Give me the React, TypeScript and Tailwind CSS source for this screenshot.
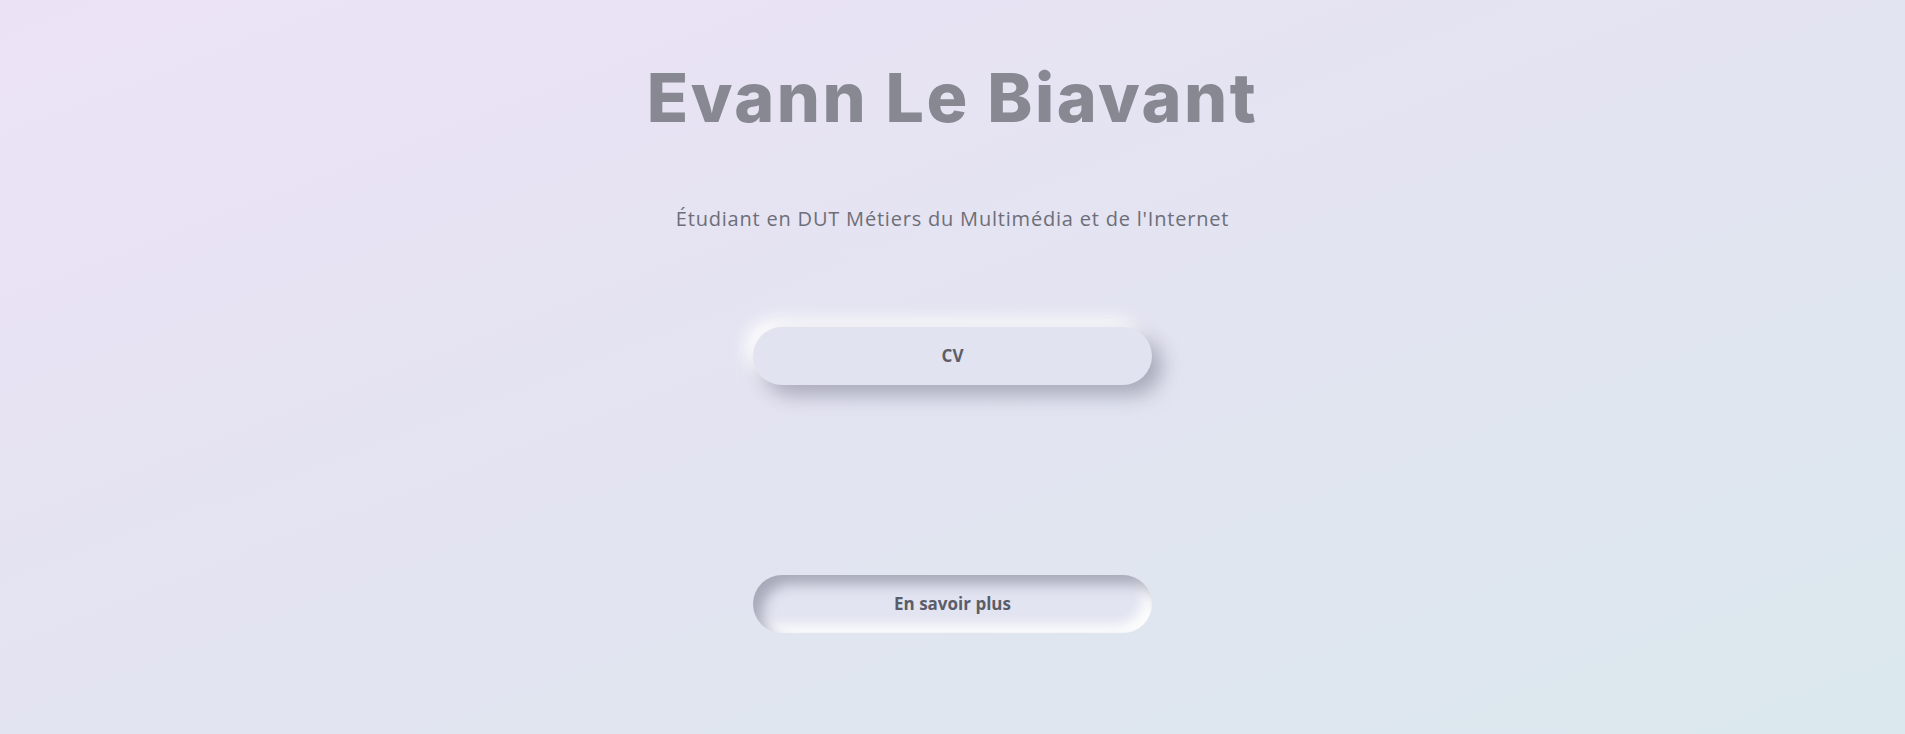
export default function App() {
  return (
    <main className="min-h-[734px] w-full bg-gradient-to-br from-[#ece2f6] via-[#e3e4f1] to-[#dbe8ee] flex flex-col items-center">
      <h1 className="mt-[50px] text-[68px] leading-[94px] font-extrabold tracking-[2.5px] text-[#878891] font-['Inter',sans-serif]">
        Evann Le Biavant
      </h1>
      <p className="mt-[63px] text-[20px] leading-[24px] tracking-[0.8px] text-[#6d6e78] font-['Open_Sans',sans-serif]">
        Étudiant en DUT Métiers du Multimédia et de l'Internet
      </p>
      <button className="mt-[96px] w-[399px] h-[58px] rounded-full bg-[#e1e3f0] shadow-[10px_10px_20px_rgba(135,137,155,0.65),-8px_-8px_16px_rgba(255,255,255,0.95)] text-[17px] font-bold text-[#5b5d69] font-['Open_Sans',sans-serif]">
        CV
      </button>
      <button className="mt-[190px] w-[399px] h-[58px] rounded-full bg-[#e2e4f1] shadow-[inset_9px_9px_13px_rgba(135,137,155,0.65),inset_-8px_-8px_12px_rgba(255,255,255,0.95)] text-[17px] font-bold text-[#5b5d69] font-['Open_Sans',sans-serif]">
        En savoir plus
      </button>
    </main>
  );
}
